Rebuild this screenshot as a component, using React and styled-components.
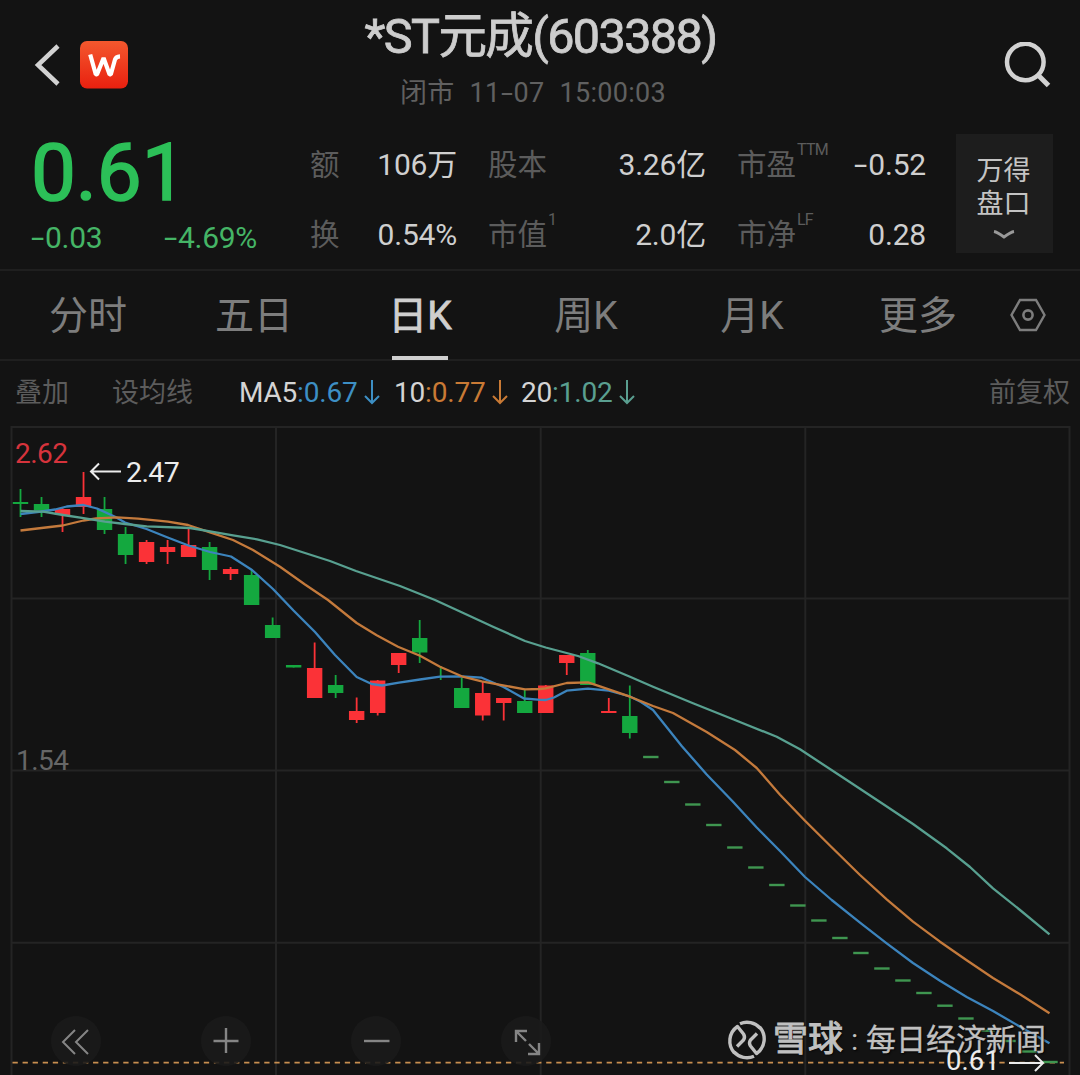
import React from "react";
import styled, { createGlobalStyle } from "styled-components";

const GlobalStyle = createGlobalStyle`
  * {
    box-sizing: border-box;
  }

  body {
    margin: 0;
    background-color: #131313;
    font-family: Roboto, "Noto Sans CJK SC", sans-serif;
    color: #cfcfcf;
  }
`;

const Page = styled.div`
  width: 1080px;
  height: 1075px;
  overflow: hidden;
  background-color: #131313;
`;

const Header = styled.header`
  height: 124px;
  padding: 0 28px 0 32px;
  display: grid;
  grid-template-columns: 200px 1fr 200px;
`;

const HeaderLeft = styled.div`
  display: flex;
  align-items: flex-start;
  padding-top: 41px;
`;

const BackIcon = styled.svg`
  width: 32px;
  height: 48px;
  margin-right: 16px;
`;

const AppLogo = styled.svg`
  width: 48px;
  height: 48px;
`;

const HeaderCenter = styled.div`
  display: flex;
  flex-direction: column;
  align-items: center;
  white-space: nowrap;
`;

const Title = styled.h1`
  margin: 7px 0 0 -3px;
  height: 60px;
  line-height: 60px;
  font-size: 48.5px;
  font-weight: 400;
  letter-spacing: -1.6px;
  color: #cdcdcd;
  -webkit-text-stroke: 0.8px #cdcdcd;
`;

const MarketTime = styled.div`
  display: flex;
  gap: ${(props) => props.gap || 0}px;
  margin: 10px 0 0 -18px;
  height: 32px;
  line-height: 32px;
  font-size: 27px;
  letter-spacing: 0.3px;
  color: #606060;
`;

const SearchIcon = styled.svg`
  width: 50px;
  height: 50px;
  margin-top: 42px;
  justify-self: end;
`;

const Quote = styled.section`
  height: 147px;
  display: flex;
  border-bottom: 2px solid #1f1f1f;
`;

const PriceBlock = styled.div`
  width: 310px;
  padding-left: 31px;
`;

const Price = styled.div`
  margin-top: 7px;
  height: 84px;
  line-height: 84px;
  font-size: 80px;
  font-weight: 400;
  letter-spacing: -0.1px;
  color: #2cc058;
  -webkit-text-stroke: 1.6px #2cc058;
`;

const PriceChange = styled.div`
  display: flex;
  justify-content: space-between;
  width: 226px;
  height: 40px;
  line-height: 40px;
  margin-top: 3px;
  font-size: 30px;
  letter-spacing: -0.3px;
  color: #45b566;
`;

const Dash = styled.span`
  display: inline-block;
  width: ${(props) => props.w || 14}px;
  transform: scaleX(1.6);
  transform-origin: left center;
`;

const Stats = styled.div`
  display: grid;
  grid-template-columns: 147px 218px 189px;
  grid-template-rows: 70px 70px;
  column-gap: 31px;
  padding-top: 6px;
  width: 646px;
`;

const Stat = styled.div`
  display: flex;
  justify-content: space-between;
  line-height: 70px;
  white-space: nowrap;
`;

const StatLabel = styled.span`
  display: flex;
  font-size: 29.5px;
  color: #5c5c5c;
`;

const StatNote = styled.sup`
  font-size: 16px;
  line-height: 40px;
  letter-spacing: -0.8px;
  margin-left: 1px;
`;

const StatValue = styled.span`
  font-size: 30px;
  letter-spacing: -0.2px;
  color: #cfcfcf;
`;

const DepthButton = styled.button`
  width: 97px;
  height: 119px;
  margin-top: 10px;
  padding: 21px 2px 0 0;
  border: 0;
  background-color: #1d1d1d;
  color: #c4c4c4;
  font-family: inherit;
  font-size: 27px;
  line-height: 33px;
  display: flex;
  flex-direction: column;
  align-items: center;
`;

const DownIcon = styled.svg`
  width: 24px;
  height: 14px;
  margin-top: 7px;
`;

const Tabs = styled.nav`
  height: 90px;
  padding-left: 5px;
  display: flex;
  border-bottom: 2px solid #1f1f1f;
`;

const Tab = styled.div`
  width: 166px;
  height: 88px;
  padding-top: 1px;
  display: flex;
  flex-direction: column;
  align-items: center;
  line-height: 88px;
  font-size: 39px;
  color: ${(props) => (props.$active ? "#cfcfcf" : "#7d7d7d")};
  -webkit-text-stroke: ${(props) => (props.$active ? "0.8px #cfcfcf" : "0")};

  &::after {
    content: "";
    display: ${(props) => (props.$active ? "block" : "none")};
    width: 56px;
    height: 4px;
    margin-top: -4px;
    background-color: #cfcfcf;
    flex-shrink: 0;
  }
`;

const SettingIcon = styled.svg`
  width: 40px;
  height: 40px;
  margin: 24px 0 0 7px;
`;

const Indicators = styled.div`
  height: 64px;
  padding: 0 10px 0 15px;
  display: flex;
  align-items: center;
  font-size: 28px;
  line-height: 62px;
  white-space: nowrap;
`;

const Option = styled.span`
  font-size: 27px;
  color: #5c5c5c;
  margin-right: ${(props) => props.$right || 0}px;
`;

const Average = styled.span`
  display: flex;
  align-items: center;
  width: ${(props) => props.$width}px;
  letter-spacing: -0.2px;
  color: ${(props) => props.color};
`;

const AverageName = styled.span`
  color: #d4d4d4;
`;

const ArrowIcon = styled.svg`
  width: 18px;
  height: 28px;
  margin-left: 6px;
`;

const Spacer = styled.div`
  flex: 1;
`;

const ChartArea = styled.main`
  position: relative;
  height: 650px;
`;

const ChartSvg = styled.svg`
  display: block;
  width: 1080px;
  height: 650px;
  font-family: Roboto, sans-serif;
`;

const Controls = styled.div`
  position: absolute;
  left: 51px;
  bottom: 9px;
  display: flex;
  gap: 100px;
`;

const RoundButton = styled.button`
  width: 50px;
  height: 50px;
  padding: 0;
  border: 0;
  border-radius: 50%;
  background-color: rgba(27, 27, 27, 0.9);
`;

const Watermark = styled.div`
  position: absolute;
  left: 727px;
  bottom: 12px;
  height: 46px;
  display: flex;
  align-items: center;
  color: #c0c0c0;
  white-space: nowrap;
  line-height: 46px;
  text-shadow: 1px 1px 2px #000;
`;

const WatermarkLogo = styled.svg`
  width: 40px;
  height: 40px;
  margin-right: 6px;
`;

const WatermarkName = styled.span`
  font-size: 35px;
  font-weight: 400;
  -webkit-text-stroke: 1px #c0c0c0;
`;

const WatermarkSource = styled.span`
  font-size: 30px;
  -webkit-text-stroke: 0.3px #c0c0c0;
`;

const WatermarkColon = styled.span`
  width: 23px;
  text-align: center;
  font-size: 30px;
`;

const stats = [
  { label: "额", value: "106万" },
  { label: "股本", value: "3.26亿" },
  { label: "市盈", note: "TTM", value: "0.52", negative: true },
  { label: "换", value: "0.54%" },
  { label: "市值", note: "1", value: "2.0亿" },
  { label: "市净", note: "LF", value: "0.28" },
];

const tabs = ["分时", "五日", "日K", "周K", "月K", "更多"];

const averages = [
  { name: "MA5", value: "0.67", color: "#3d8fc4", width: 155 },
  { name: "10", value: "0.77", color: "#c97a35", width: 127 },
  { name: "20", value: "1.02", color: "#5a9f90", width: 120 },
];

const RED = "#fb3237";
const GREEN = "#14a83f";
const STEP = 21.01;

// color, high, body top, body bottom, low
const candles = [
  [GREEN, 489, 502, 504, 517],
  [GREEN, 497, 504, 510.5, 517],
  [RED, 508, 509, 515, 532],
  [RED, 472, 497, 507, 514],
  [GREEN, 497, 509, 530, 534],
  [GREEN, 527, 534, 555, 564],
  [RED, 540, 542, 562, 564],
  [RED, 540, 547, 552, 564],
  [RED, 528, 545, 557, 557],
  [GREEN, 542, 547, 570, 580],
  [RED, 567, 569, 574, 580],
  [GREEN, 569, 575, 605, 605],
  [GREEN, 617.5, 625, 638, 638],
  [GREEN, 665, 665, 667.5, 667.5],
  [RED, 642.5, 668, 698, 698],
  [GREEN, 675, 685, 693, 698],
  [RED, 697.5, 711, 720, 723],
  [RED, 680, 680.5, 713, 715.5],
  [RED, 653, 653, 665, 673],
  [GREEN, 620, 638, 652.5, 663],
  [GREEN, 666, 676, 678, 680],
  [GREEN, 678, 688, 708, 708],
  [RED, 682, 693, 715.5, 720.5],
  [RED, 698, 698, 703, 720.5],
  [GREEN, 689, 701, 713, 713],
  [RED, 685, 685.5, 713, 713],
  [RED, 655, 655, 663, 675],
  [GREEN, 650, 653, 685, 685],
  [RED, 698, 711, 713, 713],
  [GREEN, 685.5, 716, 733, 738.5],
];

// limit-down days, only a closing dash
const limitDown = [
  757, 782, 804.5, 825, 847.5, 867.5, 885, 905.5, 920.5, 938, 953, 968.5,
  980.5, 993, 1005.7, 1018.5, 1030.7, 1041, 1051.5, 1062,
];

const ma5 =
  "20.5,514 41.5,511.5 55,509.5 66.7,506.5 83.5,505 97,508.5 115,516.7 125,522.5 146.5,529 167.7,537.5 188.5,545.5 210,552 231,556.5 252,570 273,589 293.5,610.5 315,632 335,655 356.7,677 371.7,684 382,685.5 399,682.7 420,679.5 440,676.7 461.7,676.3 481.7,677.7 503.5,687 524,698.5 538,699.7 545.7,700 554,697.5 566.7,690.7 588,688.7 609,690.7 630,696.5 641,702 653,710 681.7,746 706.7,774.5 733,801.7 756.7,827.5 780,851 805,877 831.7,900 860,922.7 886.7,943.3 913,963 940,980.7 966.7,997 993,1011 1020,1026.7 1049.5,1043.3";
const ma10 =
  "20.5,530.5 62.7,525.5 83.5,520.5 96,518.5 117,517.3 138,518.7 168,521.7 188,525 210,532.3 233,540 253,550 280,566.7 305,584.5 328,600 356.7,623 376.7,635.3 398,646.7 420,655.7 440,666.7 461.7,676.3 481.7,681.3 503,685.3 525,689.3 540,689 545.7,688.3 566.7,683 588,682.3 600,686.3 630,696.7 653,706 673,713 706.7,732 735,750 756.7,768 780,794.7 805,820.7 831.7,847.3 860,875 886.7,899.3 913,921.7 940,941.7 966.7,960.3 993,978 1020,994.3 1049.5,1013.3";
const ma20 =
  "20.5,511 43,511.7 63,515 83.5,518.2 105,521.7 125,524 146.7,526.3 190,528 210,531.3 233,535.3 257,539.3 280,545 330,561 356,571 400,586 435,600 460,611.5 493,626.7 525,641 545.7,647.5 578,656 598,663.3 630,676.7 653,686.7 693,703.3 733,719.3 776.7,736.7 800,749.3 846.7,780 883,804 913,824 946.7,848.3 970,867 993,888.3 1020,910 1049.5,934.3";

function Minus({ w }) {
  return <Dash w={w}>-</Dash>;
}

function Candle({ index, data }) {
  const [color, high, top, bottom, low] = data;
  const x = 20.5 + STEP * index;
  const width = index === 20 ? 0 : 15.4;
  return (
    <g fill={color}>
      <rect x={x - 0.9} y={high} width={1.8} height={low - high} />
      <rect x={x - width / 2} y={top} width={width} height={bottom - top} />
    </g>
  );
}

function KLineChart() {
  return (
    <ChartSvg viewBox="0 425 1080 650">
      <g stroke="#242424" strokeWidth="2" fill="none">
        <path d="M11.5 1075V427H1069.5V1075" />
        <path d="M276 427V1075M540.7 427V1075M805.3 427V1075" />
        <path d="M11.5 598.5H1069.5M11.5 770.5H1069.5M11.5 942.7H1069.5" />
      </g>
      <path
        d="M12.5 1062.7H1064"
        stroke="#c98f50"
        strokeWidth="1.8"
        strokeDasharray="5.3 4.77"
      />
      {candles.map((data, index) => (
        <Candle key={index} index={index} data={data} />
      ))}
      {limitDown.map((y, index) => (
        <rect
          key={y}
          x={20.5 + STEP * (index + 30) - 7.7}
          y={y - 1.2}
          width={15.4}
          height={2.4}
          fill="#3f9650"
        />
      ))}
      <g fill="none" strokeWidth="2.3" strokeLinejoin="round">
        <polyline points={ma5} stroke="#3c84bd" />
        <polyline points={ma10} stroke="#c47a3c" />
        <polyline points={ma20} stroke="#58a090" />
      </g>
      <text x="15" y="463" fontSize="28" fill="#d6333c" letterSpacing="-0.5">
        2.62
      </text>
      <text x="16" y="770" fontSize="28" fill="#666" letterSpacing="-0.5">
        1.54
      </text>
      <path
        d="M99 463.5L91 471.5L99 479.5M91 471.5H121"
        stroke="#ececec"
        strokeWidth="2"
        fill="none"
      />
      <text x="126" y="482" fontSize="28.5" fill="#ececec" letterSpacing="-0.6">
        2.47
      </text>
    </ChartSvg>
  );
}

// drawn above the watermark
const LastPrice = styled.div`
  position: absolute;
  left: 946px;
  bottom: 0;
  height: 28px;
  line-height: 28px;
  display: flex;
  align-items: center;
  font-size: 27.5px;
  color: #ececec;
`;

const LastArrow = styled.svg`
  width: 38px;
  height: 20px;
  margin: 3px 0 0 8px;
`;

export default function App() {
  return (
    <Page>
      <GlobalStyle />
      <Header>
        <HeaderLeft>
          <BackIcon viewBox="0 0 32 48" fill="none" stroke="#d2d2d2">
            <path d="M26 5L6 24L26 43" strokeWidth="4.5" />
          </BackIcon>
          <AppLogo viewBox="0 0 48 48">
            <defs>
              <linearGradient id="logo" x1="0" y1="0" x2="0" y2="1">
                <stop offset="0" stopColor="#f4582e" />
                <stop offset="1" stopColor="#e8200f" />
              </linearGradient>
            </defs>
            <rect width="48" height="47.5" rx="7" fill="url(#logo)" />
            <path
              d="M10.2 13.5L15.8 33.5H17L23.6 17L29.6 33.5H30.8L35 18.5Q36 15.6 40 15.4"
              fill="none"
              stroke="#fff"
              strokeWidth="4.2"
              strokeLinejoin="bevel"
            />
          </AppLogo>
        </HeaderLeft>
        <HeaderCenter>
          <Title>*ST元成(603388)</Title>
          <MarketTime gap={15}>
            <span>闭市</span>
            <span>
              11
              <Minus w={13} />
              07
            </span>
            <span>15:00:03</span>
          </MarketTime>
        </HeaderCenter>
        <SearchIcon viewBox="0 0 50 50" fill="none" stroke="#d2d2d2">
          <circle cx="23.3" cy="20" r="18.3" strokeWidth="4.5" />
          <path d="M36 33L46.5 43.5" strokeWidth="5" />
        </SearchIcon>
      </Header>
      <Quote>
        <PriceBlock>
          <Price>0.61</Price>
          <PriceChange>
            <span>
              <Minus />
              0.03
            </span>
            <span>
              <Minus />
              4.69%
            </span>
          </PriceChange>
        </PriceBlock>
        <Stats>
          {stats.map((stat) => (
            <Stat key={stat.label}>
              <StatLabel>
                {stat.label}
                {stat.note && <StatNote>{stat.note}</StatNote>}
              </StatLabel>
              <StatValue>
                {stat.negative && <Minus />}
                {stat.value}
              </StatValue>
            </Stat>
          ))}
        </Stats>
        <DepthButton>
          <span>万得</span>
          <span>盘口</span>
          <DownIcon viewBox="0 0 24 14" fill="none" stroke="#999">
            <path d="M2 3.5Q5 4 12 9Q19 4 22 3.5" strokeWidth="3" />
          </DownIcon>
        </DepthButton>
      </Quote>
      <Tabs>
        {tabs.map((tab) => (
          <Tab key={tab} $active={tab === "日K"}>
            {tab}
          </Tab>
        ))}
        <SettingIcon viewBox="0 0 40 40" fill="none" stroke="#7d7d7d">
          <path d="M12 5H28L36.5 20L28 35H12L3.5 20Z" strokeWidth="2.4" />
          <circle cx="20" cy="20" r="4.6" strokeWidth="2.6" />
        </SettingIcon>
      </Tabs>
      <Indicators>
        <Option $right={43}>叠加</Option>
        <Option $right={46}>设均线</Option>
        {averages.map((item) => (
          <Average key={item.name} color={item.color} $width={item.width}>
            <AverageName>{item.name}</AverageName>:{item.value}
            <ArrowIcon viewBox="0 0 18 28" fill="none" stroke={item.color}>
              <path d="M9 1V24M2 17L9 24L16 17" strokeWidth="2" />
            </ArrowIcon>
          </Average>
        ))}
        <Spacer />
        <Option>前复权</Option>
      </Indicators>
      <ChartArea>
        <KLineChart />
        <Controls>
          <RoundButton>
            <svg width="50" height="50" fill="none" stroke="#858585" strokeWidth="2">
              <path d="M24 14L12 26L24 38M37 14L25 26L37 38" />
            </svg>
          </RoundButton>
          <RoundButton>
            <svg width="50" height="50" fill="none" stroke="#858585" strokeWidth="2.4">
              <path d="M25 12V37M12.5 25H37.5" />
            </svg>
          </RoundButton>
          <RoundButton>
            <svg width="50" height="50" fill="none" stroke="#858585" strokeWidth="2.4">
              <path d="M13 25H38.5" />
            </svg>
          </RoundButton>
          <RoundButton>
            <svg width="50" height="50" fill="none" stroke="#858585" strokeWidth="2.4">
              <path d="M15 26V15H26M15 15L25 25M38 27V38H27M38 38L28 28" />
            </svg>
          </RoundButton>
        </Controls>
        <Watermark>
          <WatermarkLogo viewBox="0 0 40 40" fill="none" stroke="#c0c0c0">
            <path
              d="M7.5 33A17.6 17.6 0 0 1 10.5 6.5L16.5 14Q18.5 17 16.5 20L10 26.5"
              strokeWidth="3.4"
              strokeLinejoin="round"
            />
            <path
              d="M32.5 7A17.6 17.6 0 0 1 29.5 33.5L23.5 26Q21.5 23 23.5 20L30 13.5"
              strokeWidth="3.4"
              strokeLinejoin="round"
            />
            <path
              d="M13 3.7A17.6 17.6 0 0 1 33 8M27 36.3A17.6 17.6 0 0 1 7 32"
              strokeWidth="3.4"
            />
          </WatermarkLogo>
          <WatermarkName>雪球</WatermarkName>
          <WatermarkColon>:</WatermarkColon>
          <WatermarkSource>每日经济新闻</WatermarkSource>
        </Watermark>
        <LastPrice>
          0.61
          <LastArrow viewBox="0 0 38 20" fill="none" stroke="#ececec">
            <path d="M1 10H35M27 2L35 10L27 18" strokeWidth="2" />
          </LastArrow>
        </LastPrice>
      </ChartArea>
    </Page>
  );
}
